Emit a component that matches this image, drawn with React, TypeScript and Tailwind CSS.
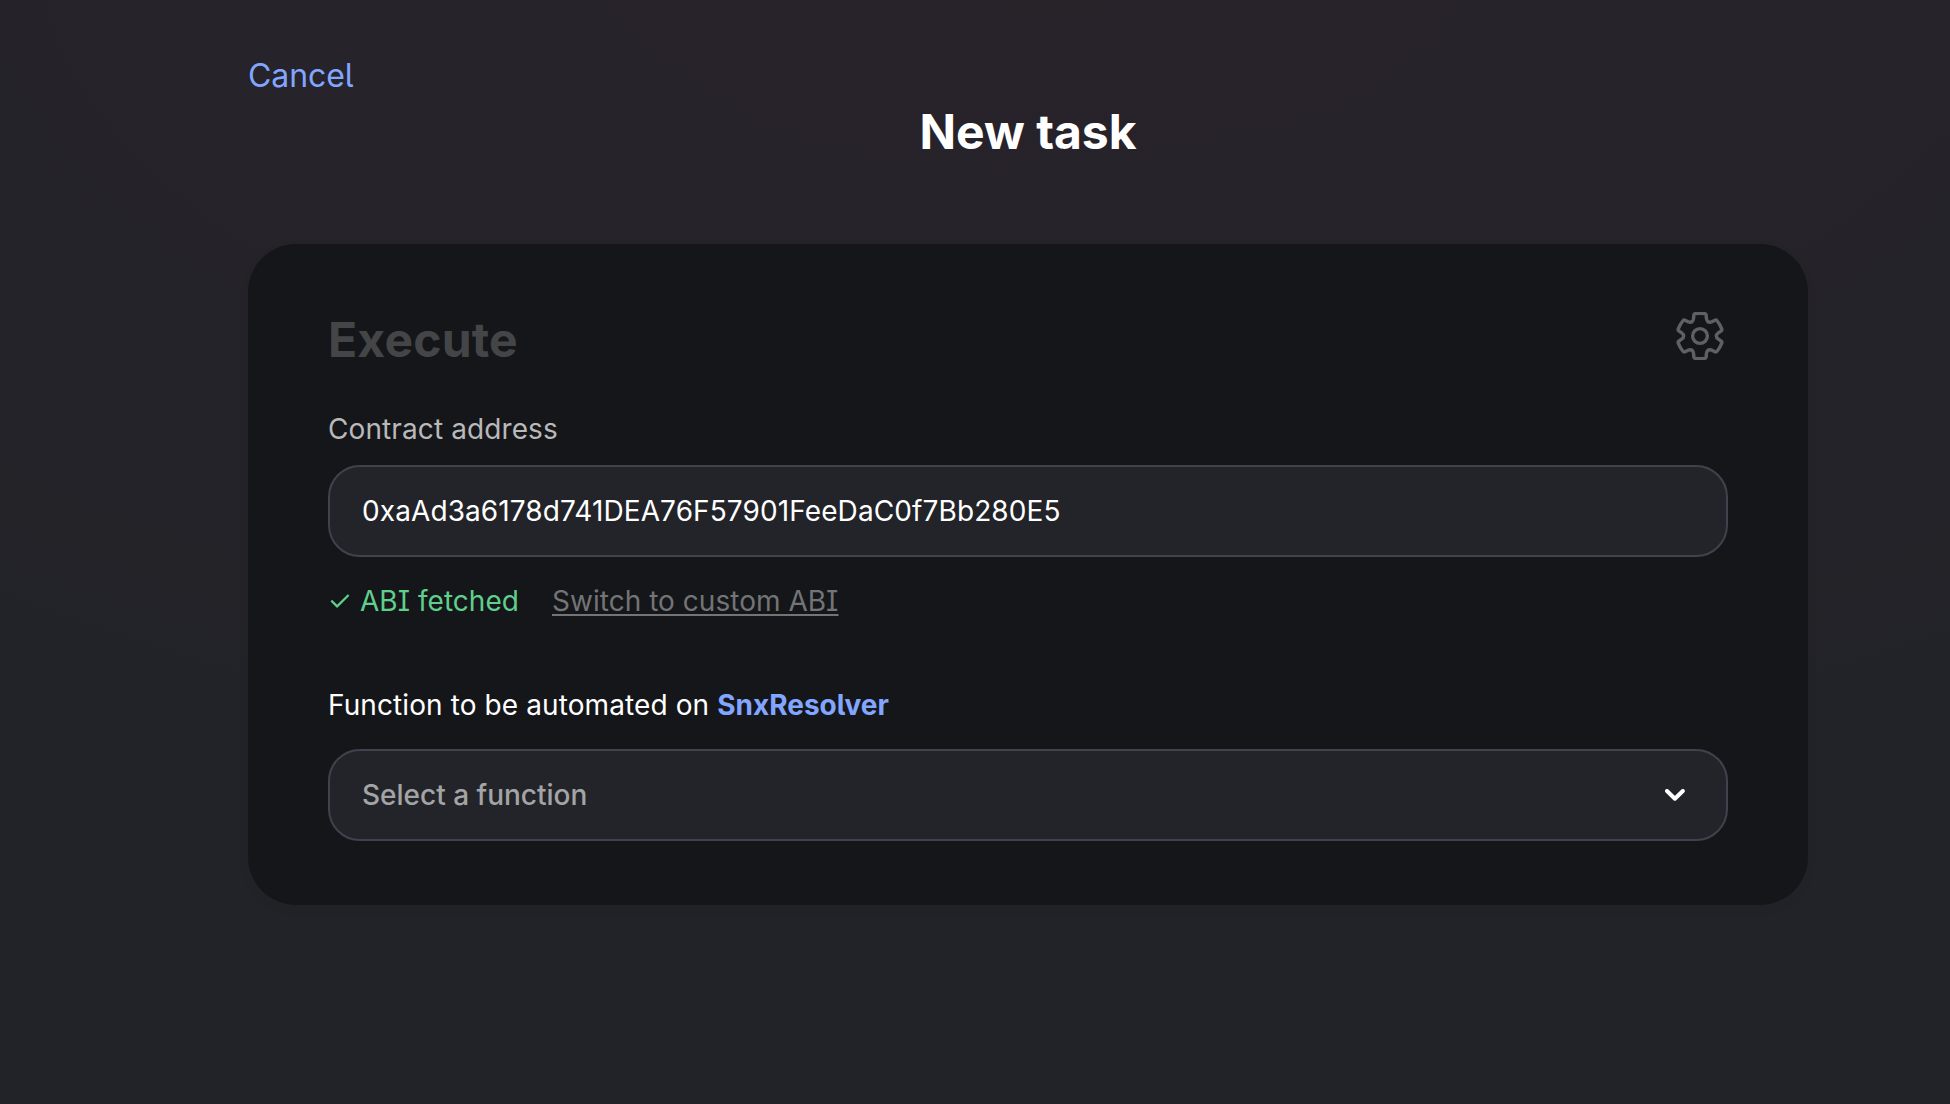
import type { ReactNode } from "react";

const TEETH = [0, 60, 120, 180, 240, 300];

function GearIcon() {
  return (
    <svg className="size-12 shrink-0" viewBox="-24 -24 48 48" fill="none" stroke="#5e6063" strokeWidth="3.4" strokeLinecap="round" strokeLinejoin="round">
      <circle r="7.4" />
      {TEETH.map((angle) => (
        <path
          key={angle}
          transform={`rotate(${angle})`}
          d="M-8.2-14.2C-7-14.9-6.5-16.1-6.4-17.5L-6.2-20.7Q-6.1-22.2-4.7-22.4Q0-23.2 4.7-22.4Q6.1-22.2 6.2-20.7L6.4-17.5C6.5-16.1 7-14.9 8.2-14.2"
        />
      ))}
    </svg>
  );
}

function CheckIcon() {
  return (
    <svg className="h-[14px] w-5 shrink-0" viewBox="0 0 20 14" fill="none" stroke="currentColor" strokeWidth="2.2">
      <path d="M1.3 6.6 7.1 12.4 18.6 1" />
    </svg>
  );
}

function ChevronIcon() {
  return (
    <svg className="h-3 w-5 shrink-0" viewBox="0 0 20 12" fill="none" stroke="currentColor" strokeWidth="4" strokeLinecap="round" strokeLinejoin="round">
      <path d="M2 2 9.9 9.7 17.8 2" />
    </svg>
  );
}

function Field({ children }: { children: ReactNode }) {
  return (
    <div className="flex h-[92px] items-center justify-between rounded-[32px] border-2 border-[#3f434e] bg-[#232429] pr-[41px] pl-8 text-[28px]">
      {children}
    </div>
  );
}

export default function App() {
  return (
    <div className="min-h-screen bg-[#222328] bg-[radial-gradient(1750px_880px_at_1028px_-60px,#282229_0%,#26232a_45%,#222328_100%)] pt-14 font-['Inter',sans-serif] text-white [font-feature-settings:'cv05','cv08']">
      <main className="ml-[248px] w-[1560px]">
        <button className="block h-10 text-[32px] leading-10 tracking-[-0.1px] text-[#82a6ff]">Cancel</button>
        <h1 className="mt-1 text-center text-5xl leading-16 font-bold">New task</h1>

        <section className="mt-20 h-[661px] rounded-[48px] bg-[#15161a] px-20 pt-[66px] shadow-[0_4px_12px_rgba(0,0,0,0.04)]">
          <div className="flex h-[60px] items-center justify-between pr-1">
            <h2 className="text-5xl leading-[60px] font-bold tracking-[0.2px] text-[#444546]">Execute</h2>
            <div className="-mt-2">
              <GearIcon />
            </div>
          </div>

          <label className="mt-[42px] mb-[19px] block text-[28px] leading-[34px] tracking-[0.1px] text-[#b9b9ba]">
            Contract address
          </label>
          <Field>
            <span className="tracking-[0.1px] [font-feature-settings:normal]">0xaAd3a6178d741DEA76F57901FeeDaC0f7Bb280E5</span>
          </Field>

          <div className="mt-[27px] flex items-center text-[28px] leading-[34px] tracking-[0.03px]">
            <span className="ml-[2px] flex items-center gap-2.5 text-[#5fcf8b]">
              <CheckIcon />
              ABI fetched
            </span>
            <a className="ml-[33px] text-[#737475] underline decoration-2 underline-offset-[3px]">Switch to custom ABI</a>
          </div>

          <p className="mt-[70px] mb-[27px] text-[28px] leading-[34px] tracking-[0.1px]">
            Function to be automated on <strong className="font-bold tracking-normal text-[#82a6ff]">SnxResolver</strong>
          </p>
          <Field>
            <span className="font-medium text-[#a3a4a6] [font-feature-settings:normal]">Select a function</span>
            <ChevronIcon />
          </Field>
        </section>
      </main>
    </div>
  );
}
